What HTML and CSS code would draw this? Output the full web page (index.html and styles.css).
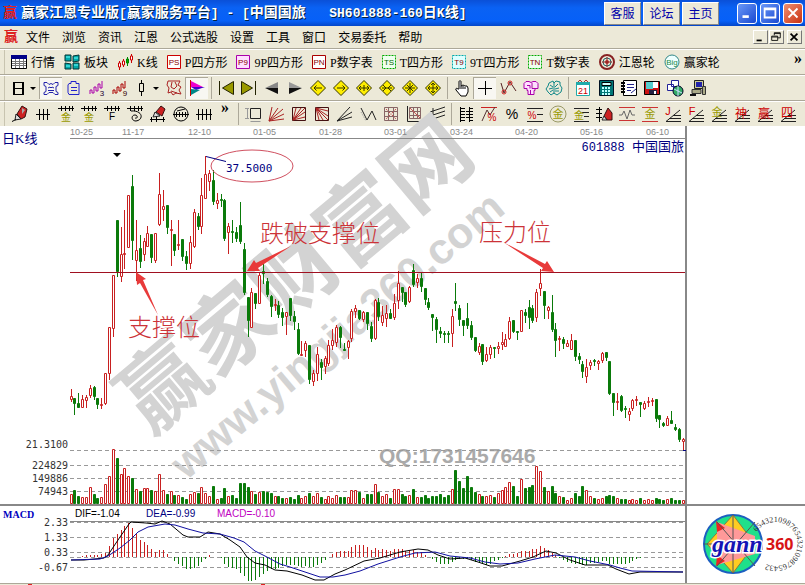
FILE: index.html
```html
<!DOCTYPE html>
<html lang="zh-CN">
<head>
  <meta charset="UTF-8">
  <meta name="viewport" content="width=device-width, initial-scale=1.0">
  <title>赢家江恩专业版</title>
  <link rel="stylesheet" href="styles.css">
</head>
<body>
  <header class="title-bar">
    <span class="app-icon">赢</span>
    <h1>赢家江恩专业版<span class="mono">[</span>赢家服务平台<span class="mono">] - [</span>中国国旅<span class="mono">   SH601888-160</span>日<span class="mono">K</span>线<span class="mono">]</span></h1>
    <nav class="title-links">
      <button>客服</button>
      <button>论坛</button>
      <button>主页</button>
    </nav>
    <div class="window-btns">
      <button aria-label="最小化"><svg viewBox="0 0 20 20"><path d="M5 14h7" stroke="#fff" stroke-width="3"/></svg></button>
      <button aria-label="最大化"><svg viewBox="0 0 20 20"><path d="M4 5h12v10H4z M4 6h12" fill="none" stroke="#fff" stroke-width="2"/></svg></button>
      <button class="close" aria-label="关闭"><svg viewBox="0 0 20 20"><path d="M5 5l10 10M15 5L5 15" stroke="#fff" stroke-width="2"/></svg></button>
    </div>
  </header>

  <nav class="menu-bar">
    <span class="app-icon">赢</span>
    <button>文件</button>
    <button>浏览</button>
    <button>资讯</button>
    <button>江恩</button>
    <button>公式选股</button>
    <button>设置</button>
    <button>工具</button>
    <button>窗口</button>
    <button>交易委托</button>
    <button>帮助</button>
    <div class="mdi-btns">
      <button aria-label="最小化"><svg viewBox="0 0 14 14"><path d="M3 11h6" stroke="#000" stroke-width="2"/></svg></button>
      <button aria-label="还原"><svg viewBox="0 0 14 14"><path d="M5 5V2h7v6h-3M5 3h7M2 6h7v5H2zM2 7h7" fill="none" stroke="#000"/></svg></button>
      <button class="mdi-close" aria-label="关闭"><svg viewBox="0 0 14 14"><path d="M3 3l8 8M11 3l-8 8" stroke="#000" stroke-width="2"/></svg></button>
    </div>
  </nav>

  <div class="toolbar labels">
    <button><svg viewBox="0 0 16 16"><path d="M.5 1.500h15v13H.5z" fill="#fff" stroke="#000"/><path d="M0 1h16v4H0z" fill="#008"/><path d="M1 7.500h14M1 9.500h14M1 11.500h14M4.500 5v9M8.500 5v9M12.500 5v9" stroke="#777"/></svg>行情</button>
    <button><svg viewBox="0 0 16 16" fill="#0aa" stroke="#033"><path d="M1 1h6v6H1zM9 2l6-1v6l-6 1zM1 9l6 1v5H1zM9 9h6v6H9z"/><path d="M2 3h4M10 4h4M2 12h4M10 11h4" stroke="#6ff"/></svg>板块</button>
    <button><svg viewBox="0 0 16 16" fill="#fff"><path d="M2.500 7v9M6.500 5v8M14.500 0v9" stroke="#c00"/><path d="M10.500 3v9" stroke="#080"/><path d="M1.500 9h2v4h-2zM5.500 7h2v4h-2zM13.500 2h2v4h-2z" stroke="#c00"/><path d="M9.500 5h2v4h-2z" fill="#0a0" stroke="#080"/></svg>K线</button>
    <button><svg class="tile" viewBox="0 0 14 14"><path d="M.5.5h13v13H.5z" fill="#fff" stroke="#c00"/><text x="7" y="10" fill="#800">PS</text></svg>P四方形</button>
    <button><svg class="tile" viewBox="0 0 14 14"><path d="M.5.5h13v13H.5z" fill="#fdf" stroke="#a0a"/><text x="7" y="10" fill="#800">P9</text></svg>9P四方形</button>
    <button><svg class="tile" viewBox="0 0 14 14"><path d="M.5.5h13v13H.5z" fill="#fff" stroke="#a00"/><text x="7" y="10" fill="#800">PN</text></svg>P数字表</button>
    <button><svg class="tile" viewBox="0 0 14 14"><path d="M.5.5h13v13H.5z" fill="#efe" stroke="#0a0" stroke-dasharray="2 1"/><text x="7" y="10" fill="#060">TS</text></svg>T四方形</button>
    <button><svg class="tile" viewBox="0 0 14 14"><path d="M.5.5h13v13H.5z" fill="#dff" stroke="#0aa" stroke-dasharray="2 1"/><text x="7" y="10" fill="#800">T9</text></svg>9T四方形</button>
    <button><svg class="tile" viewBox="0 0 14 14"><path d="M.5.5h13v13H.5z" fill="#efe" stroke="#0a0" stroke-dasharray="2 1"/><text x="7" y="10" fill="#800">TN</text></svg>T数字表</button>
    <button><svg viewBox="0 0 16 16" fill="none"><circle cx="8" cy="8" r="7" stroke="#822" stroke-width="2"/><circle cx="8" cy="8" r="4" stroke="#266"/><circle cx="8" cy="8" r="2" fill="#c33"/><path d="M8 3v10M3 8h10" stroke="#822"/></svg>江恩轮</button>
    <button><svg viewBox="0 0 16 16"><circle cx="8" cy="8" r="7" fill="#eff" stroke="#388"/><text x="8" y="11" fill="#284">Big</text></svg>赢家轮</button>
    <button class="more">»</button>
  </div>

  <div class="toolbar icons">
    <button class="slim" aria-label="日线"><svg viewBox="0 0 18 18" fill="none" stroke="#000"><path d="M5 3v13M14 3v13" stroke-width="2"/><path d="M4 3.500h11M5 9.500h9M5 15.500h9"/></svg></button>
    <button class="drop" aria-label="周期"><svg viewBox="0 0 8 8"><path d="M1 3h6L4 6z"/></svg></button>
    <button class="on" aria-label="叠加"><svg viewBox="0 0 18 18" fill="none" stroke="#22a"><path d="M2 3.500h3l2 2 2-1 2 1 2-2h3v3l-2 1v5l2 1v2h-3l-2-2H7l-2 2H2v-2l2-1V7.500l-2-1z"/><path d="M6 9l2-1 1 1 1-1 2 1M6 11.500h6"/></svg></button>
    <button aria-label="记录"><svg viewBox="0 0 18 18" fill="none" stroke="#22c"><path d="M4 4.500h2V2.500h5v2h3v11H4l-1-2V6zM6 8.500h6M6 11.500h6"/></svg></button>
    <button aria-label="三日"><svg viewBox="0 0 18 18" fill="none" stroke="#a0a"><path d="M2 15v-4h2v3h2V8h2v4h2V5h2v4h2V2"/><text x="14" y="17" fill="#203" stroke="none" font-size="8">3</text></svg></button>
    <button aria-label="九日"><svg viewBox="0 0 18 18" fill="none" stroke="#a00"><path d="M2 15v-4h2v3h2V8h2v4h2V5h2v4h2V2"/><text x="14" y="17" fill="#300" stroke="none" font-size="8">9</text></svg></button>
    <button class="slim" aria-label="K线样式"><svg viewBox="0 0 18 18" fill="none" stroke="#000"><path d="M9.500 1v3M9.500 13v4M7.500 4.500h4v8h-4z"/></svg></button>
    <button class="drop" aria-label="样式"><svg viewBox="0 0 8 8"><path d="M1 3h6L4 6z"/></svg></button>
    <button aria-label="画图"><svg viewBox="0 0 18 18" fill="none" stroke="#a22"><path d="M3 2h12l-2 4 3 2-2 3 2 4-5-1-3 2-2-3-3 1 1-5-2-3zM7 3l-1 5 3 2 3-3-2-4M6 12l6 2"/></svg></button>
    <button class="on" aria-label="旗形"><svg viewBox="0 0 18 18"><path d="M3 2l12 6H3z" fill="#e0c"/><path d="M3 8h14l-9 3z" fill="#40c"/><path d="M3 10l9 1-9 5z" fill="#088"/><path d="M2.500 1v16" stroke="#c00"/></svg></button>
    <i class="sep"></i>
    <button aria-label="首页"><svg viewBox="0 0 18 18" fill="#990" stroke="#220"><path d="M2.500 2v14M16.500 2.500v13L5.500 9z"/></svg></button>
    <button aria-label="末页"><svg viewBox="0 0 18 18" fill="#990" stroke="#220"><path d="M15.500 2v14M1.500 2.500v13L12.500 9z"/></svg></button>
    <button aria-label="左移"><svg viewBox="0 0 18 18"><path d="M2 9l13-6v6z" fill="#888"/><path d="M2 9h13v6z" fill="#111"/></svg></button>
    <button aria-label="右移"><svg viewBox="0 0 18 18"><path d="M3 3l13 6H3z" fill="#999"/><path d="M3 9h13L3 15z" fill="#111"/></svg></button>
    <button aria-label="左"><svg viewBox="0 0 18 18" fill="#fe0" stroke="#330"><path d="M9 1.500L16.500 9 9 16.500 1.500 9z"/><path d="M5 9h8M7.500 6.500L5 9l2.500 2.500" fill="none"/></svg></button>
    <button aria-label="右"><svg viewBox="0 0 18 18" fill="#fe0" stroke="#330"><path d="M9 1.500L16.500 9 9 16.500 1.500 9z"/><path d="M5 9h8M10.500 6.500L13 9l-2.500 2.500" fill="none"/></svg></button>
    <button aria-label="横向放大"><svg viewBox="0 0 18 18" fill="#fe0" stroke="#330"><path d="M9 1.500L16.500 9 9 16.500 1.500 9z"/><path d="M4 9h10M6 7L4 9l2 2M12 7l2 2-2 2M9 6v6" fill="none"/></svg></button>
    <button aria-label="横向缩小"><svg viewBox="0 0 18 18" fill="#fe0" stroke="#330"><path d="M9 1.500L16.500 9 9 16.500 1.500 9z"/><path d="M4 9h10M5 6l3 3-3 3M13 6l-3 3 3 3" fill="none"/></svg></button>
    <button aria-label="缩小"><svg viewBox="0 0 18 18" fill="#fe0" stroke="#330"><path d="M9 1.500L16.500 9 9 16.500 1.500 9z"/><path d="M4 9h10M9 4v10M6 6l6 6M12 6l-6 6" fill="none"/></svg></button>
    <button aria-label="放大"><svg viewBox="0 0 18 18" fill="#fe0" stroke="#330"><path d="M9 1.500L16.500 9 9 16.500 1.500 9z"/><path d="M4 9h10M9 4v10M7 6l2-2 2 2M7 12l2 2 2-2M6 7L4 9l2 2M12 7l2 2-2 2" fill="none"/></svg></button>
    <i class="sep"></i>
    <button aria-label="拖动"><svg viewBox="0 0 18 18" fill="#fff" stroke="#000"><path d="M6 10V2.500c0-1 2-1 2 0V7l2-1 2 1 2 0 1 2v4l-2 4H8l-5-6c-1-2 1-2 2-1zM8 7v3M10 7v3M12 8v2"/></svg></button>
    <button class="on" aria-label="十字线"><svg viewBox="0 0 18 18"><path d="M2 9.500h14M9.500 2v14" stroke="#000"/></svg></button>
    <button aria-label="连线"><svg viewBox="0 0 18 18" fill="none" stroke="#c22"><path d="M2 4l3 10 6-11 6 9" stroke="#522"/><circle cx="5" cy="13" r="2"/><circle cx="11" cy="4" r="2"/></svg></button>
    <button aria-label="区域"><svg viewBox="0 0 18 18" fill="#fdf" stroke="#a0a"><path d="M2 9.500v-5l2-2h3l2 1 2-1h3l2 2v5h-3v2h-1v4H6v-4H5v-2zM5 6.500h3v3M10 4v5.500h3M8.500 11v4"/></svg></button>
    <button aria-label="分析"><svg viewBox="0 0 18 18" fill="none" stroke="#188"><path d="M8 2L4 4 3 7 1 10l2 3 3 3 3-2 3 2 4-3 1-4-2-3V3l-4-1-2 2zM9 3v12M5 6l3 2M4 10l4-1M5 13l3-2M13 5l-3 3M14 9l-4 1M14 12l-4 0"/></svg></button>
    <i class="sep"></i>
    <button aria-label="日历"><svg viewBox="0 0 18 18"><path d="M2.500 4.500h13v12h-13z" fill="#fff" stroke="#2aa"/><path d="M2 3h14v3H2z" fill="#2aa"/><path d="M4 3l2-2 2 2M10 3l2-2 2 2" fill="none" stroke="#a33"/><text x="9" y="15" fill="#c00" font-size="9">21</text></svg></button>
    <button aria-label="计算器"><svg viewBox="0 0 18 18"><path d="M2.500 1.500h14v15h-14z" fill="#077" stroke="#012"/><path d="M5 3.500h9v3H5z" fill="#cff" stroke="#000"/><path d="M5 9h9M5 12h9M5 15h9" stroke="#bff" stroke-width="2" stroke-dasharray="2 1"/></svg></button>
    <button aria-label="笔记"><svg viewBox="0 0 18 18"><path d="M3.500 1.500h13v15h-13z" fill="#fff" stroke="#000"/><path d="M1 4h4M1 7h4M1 10h4M1 13h4" stroke="#000" stroke-width="2"/><path d="M7 5.500h7M7 8.500h7M7 11.500h4M11 14l5-4" stroke="#228"/></svg></button>
    <button aria-label="保存"><svg viewBox="0 0 18 18"><path d="M1.500 2.500h15v13h-15z" fill="#c11" stroke="#000"/><path d="M3 3h7v7H3z" fill="#5cc"/><path d="M10 3h5v6h-5z" fill="#fff"/><path d="M6 11h8v4H6z" fill="#224"/><path d="M11 12h2v3h-2z" fill="#fff"/></svg></button>
    <button aria-label="网络"><svg viewBox="0 0 18 18"><path d="M5.500 1.500h7v6h-7zM1.500 5.500h6v6h-6z" fill="#fff" stroke="#229"/><circle cx="12" cy="12" r="5" fill="#3a6" stroke="#002"/><path d="M8 10l8 4M12 7v10" stroke="#cdf"/></svg></button>
    <button aria-label="系统"><svg viewBox="0 0 18 18"><path d="M5.500 1.500h9v8h-9z" fill="#cc9" stroke="#222"/><path d="M7 3h6v5H7z" fill="#22a"/><path d="M3 10.500h9v4H3zM13.500 7.500h3v8h-3z" fill="#aa8" stroke="#333"/><path d="M1 15h6v2H1z" fill="#111"/></svg></button>
  </div>

  <div class="toolbar icons">
    <button aria-label="画笔"><svg viewBox="0 0 18 18"><path d="M6 9l5-8 5 3-2 8-4 2z" fill="#c22" stroke="#311"/><path d="M5 9l5 5-6 1z" fill="#ddd" stroke="#222"/><path d="M1 16.500l4-2" stroke="#000"/><path d="M11 3l3 2-3 4z" fill="#aaa"/></svg></button>
    <button aria-label="周期尺"><svg viewBox="0 0 18 18"><path d="M2 9.500h14M5.500 4v11M9.500 4v11M13.500 4v11" stroke="#000"/></svg></button>
    <button aria-label="金尺一"><svg viewBox="0 0 18 18"><path d="M1 3.500h16M4.500 1v5M8.500 1v5M12.500 1v5M15.500 1v5" stroke="#000"/><text x="9" y="16" fill="#990" font-size="10">金</text></svg></button>
    <button aria-label="金尺二"><svg viewBox="0 0 18 18"><path d="M1 3.500h16M4.500 1v5M8.500 1v5M12.500 1v5M15.500 1v5" stroke="#000"/><text x="9" y="16" fill="#990" font-size="10">金</text></svg></button>
    <button aria-label="斐波那契尺"><svg viewBox="0 0 18 18"><path d="M1 3.500h16M4.500 1v5M8.500 1v5M12.500 1v5M15.500 1v5" stroke="#000"/><text x="9" y="15" font-size="10">F</text></svg></button>
    <button aria-label="螺旋尺"><svg viewBox="0 0 18 18" fill="none" stroke="#000"><path d="M1 3.500h16M4.500 1v5M8.500 1v5M12.500 1v5M15.500 1v5"/><path d="M5 6c12-1 13 9 5 10-5 0-5-6-1-6 3 0 3 4 0 3"/></svg></button>
    <button aria-label="标尺笔"><svg viewBox="0 0 18 18"><path d="M7 7l5-6 4 3-3 7z" fill="#c22" stroke="#311"/><path d="M6 7l5 4-7 1z" fill="#ddd" stroke="#222"/><path d="M1 14.500h15M2.500 12v5M7.500 12v5M14.500 12v5" stroke="#000"/></svg></button>
    <button aria-label="圆周"><svg viewBox="0 0 18 18" fill="none" stroke="#000"><circle cx="9" cy="9" r="7"/><path d="M1 9.500h16M4.500 7v5M7.500 7v5M10.500 7v5M13.500 7v5M5 6l8-2"/></svg></button>
    <button aria-label="等分"><svg viewBox="0 0 18 18"><path d="M1 9.500h16M3.500 4v11M7.500 4v11M11.500 4v11M15.500 4v11" stroke="#000"/></svg></button>
    <button class="overflow">»</button>
    <i class="sep"></i>
    <button aria-label="矩形"><svg viewBox="0 0 18 18" fill="none" stroke="#222"><path d="M6.500 3.500h10v10h-10z"/><path d="M1 3.500h4M1 13.500h4M3.500 3v11M6.500 16.500h10" stroke="#999"/></svg></button>
    <button aria-label="扇形"><svg viewBox="0 0 18 18" stroke="#a22"><path d="M2 16L5 2M2 16L11 3M2 16L16 4M2 16L17 9M2 16l15-2"/></svg></button>
    <button aria-label="方扇形"><svg viewBox="0 0 18 18" fill="none" stroke="#a22"><path d="M2.500 2.500h13v13h-13z" stroke="#411"/><path d="M3 15L6 3M3 15l8-12M3 15L15 3M3 15l12-8M3 15l12-3"/></svg></button>
    <button aria-label="反扇形"><svg viewBox="0 0 18 18" fill="none" stroke="#a22"><path d="M2.500 2.500h13v13h-13z" stroke="#411"/><path d="M3 3l3 12M3 3l7 12M3 3l12 12M3 3l12 8M3 3l12 3"/></svg></button>
    <button aria-label="速度线"><svg viewBox="0 0 18 18" stroke="#222"><path d="M1 16L14 2M1 16L16 7M1 16l15-4"/></svg></button>
    <button aria-label="折线"><svg viewBox="0 0 18 18" fill="none" stroke="#222"><path d="M2 3l6 12 5-9 4 9"/><path d="M2 7l5 9" stroke="#999" stroke-dasharray="1 1"/></svg></button>
    <button aria-label="网格"><svg viewBox="0 0 18 18" fill="none" stroke="#866"><path d="M2.500 2.500h13v13h-13zM2 6.500h14M2 11.500h14M6.500 2v14M11.500 2v14"/><path d="M4 4l10 10M14 4L4 14" stroke="#c55" stroke-dasharray="2 2"/></svg></button>
    <button aria-label="坐标网格"><svg viewBox="0 0 18 18" fill="none" stroke="#866"><path d="M4.500 2.500h11v11h-11zM4 6.500h12M4 10.500h12M8.500 2v12M12.500 2v12"/><path d="M2.500 1v15.500h15" stroke="#222"/><path d="M5 3l10 10" stroke="#c55"/></svg></button>
    <button aria-label="平行线"><svg viewBox="0 0 18 18" stroke="#222"><path d="M2 7l15-5M2 11l15-5M2 15l15-5M5 3v13"/></svg></button>
    <i class="sep"></i>
    <button aria-label="价格尺"><svg viewBox="0 0 18 18" stroke="#000"><path d="M3.500 2v15M12.500 2v15M4 3.500h4M4 6.500h4M4 9.500h4M4 12.500h4M4 15.500h4M12 3.500h4M9 6.500h7M9 9.500h7M9 12.500h7M12 15.500h4"/></svg></button>
    <button aria-label="百分比线"><svg viewBox="0 0 18 18"><path d="M1 2.500h16" stroke="#c22"/><path d="M2 16l5-11 3 5 5-8" fill="none" stroke="#533"/><text x="12" y="16" fill="#c00" font-size="10">%</text></svg></button>
    <button aria-label="百分比"><svg viewBox="0 0 18 18"><text x="9" y="14" font-size="14">%</text></svg></button>
    <button aria-label="百分比区"><svg viewBox="0 0 18 18"><path d="M1 3.500h16M11 9.500h6M1 16.500h16" stroke="#222"/><text x="6" y="14" fill="#c00" font-size="10">%</text></svg></button>
    <button aria-label="金圆"><svg viewBox="0 0 18 18"><circle cx="9" cy="9" r="8" fill="none" stroke="#996"/><text x="9" y="13" fill="#990" font-size="11">金</text></svg></button>
    <button aria-label="金线"><svg viewBox="0 0 18 18"><path d="M2 3.500h15M10 7.500h7M12 11.500h5M2 16.500h15" stroke="#222"/><text x="7" y="14" fill="#990" font-size="10">金</text></svg></button>
    <button aria-label="标注"><svg viewBox="0 0 18 18"><path d="M4.500 2v15M1 4.500h6M1 8.500h6M1 12.500h6" stroke="#000"/><path d="M9 11l4-8 4 5v7l-5 0z" fill="#c22" stroke="#311"/><path d="M7 15l2-4 3 4z" fill="#ddd" stroke="#222"/></svg></button>
    <button aria-label="波浪"><svg viewBox="0 0 18 18" fill="none"><path d="M1 2.500h16M1 15.500h16" stroke="#c33"/><path d="M1 10h3l2-4 3 8 3-9 2 5h3" stroke="#666"/></svg></button>
    <button aria-label="金波"><svg viewBox="0 0 18 18"><path d="M1 2.500h16M1 16.500h16" stroke="#c33"/><text x="9" y="13" fill="#990" font-size="11">金</text></svg></button>
    <button aria-label="J线"><svg viewBox="0 0 18 18"><path d="M2 16.500L16 5M5 13.500h12M2 16.500h15M9 10.500h8" stroke="#222"/><text x="4" y="10" fill="#c00" font-size="11">J</text></svg></button>
    <button aria-label="F线"><svg viewBox="0 0 18 18"><path d="M2 16.500L16 5M5 13.500h12M2 16.500h15M9 10.500h8" stroke="#222"/><text x="5" y="10" fill="#c00" font-size="11">F</text></svg></button>
    <button aria-label="金角线"><svg viewBox="0 0 18 18"><path d="M2 16.500L16 5M5 13.500h12M2 16.500h15M9 10.500h8" stroke="#222"/><text x="7" y="11" fill="#990" font-size="11">金</text></svg></button>
    <button aria-label="神线"><svg viewBox="0 0 18 18"><path d="M2 16.500L16 5M5 13.500h12M2 16.500h15M9 10.500h8" stroke="#222"/><text x="8" y="13" fill="#c00" font-size="12">神</text></svg></button>
    <button aria-label="赢线"><svg viewBox="0 0 18 18"><path d="M2 16.500L16 5M5 13.500h12M2 16.500h15M9 10.500h8" stroke="#222"/><text x="8" y="13" fill="#c00" font-size="12">赢</text></svg></button>
    <button aria-label="四线"><svg viewBox="0 0 18 18"><path d="M2 16.500L16 5M5 13.500h12M2 16.500h15M9 10.500h8" stroke="#222"/><text x="8" y="12" fill="#c00" font-size="12">四</text></svg></button>
  </div>

  <main class="workspace">
    <section class="chart">
      <svg viewBox="0 126 685 457">
        <g class="watermark">
          <text transform="translate(150 436) rotate(-40)" font-size="86">赢家财富网</text>
          <text transform="translate(186 481) rotate(-40)" font-size="43" class="site">www.yingjia360.com</text>
        </g>
        <text class="qq" x="379" y="463">QQ:1731457646</text>

        <path class="axis" d="M70 138.500H685M70 521.500H685"/>
        <path class="dash" d="M70 450.500H685M70 465.500H685M70 478.500H685M70 491.500H685"/>
        <path class="dash" d="M70 522.500H685M70 537.500H685M70 552.500H685M70 557.500H685M70 567.500H685"/>
        <g class="dates">
          <text x="70" y="135">10-25</text>
          <text x="122" y="135">11-17</text>
          <text x="188" y="135">12-10</text>
          <text x="253" y="135">01-05</text>
          <text x="319" y="135">01-28</text>
          <text x="384" y="135">03-01</text>
          <text x="450" y="135">03-24</text>
          <text x="515" y="135">04-20</text>
          <text x="580" y="135">05-16</text>
          <text x="646" y="135">06-10</text>
        </g>
        <g class="scale">
          <text x="68" y="448">21.3100</text>
          <text x="68" y="469">224829</text>
          <text x="68" y="482">149886</text>
          <text x="68" y="495">74943</text>
          <text x="68" y="526">2.33</text>
          <text x="68" y="541">1.33</text>
          <text x="68" y="556">0.33</text>
          <text x="68" y="571">-0.67</text>
        </g>
        <text class="name" x="2" y="143">日K线</text>
        <text class="name" x="684" y="151" text-anchor="end"><tspan class="mono">601888 </tspan>中国国旅</text>
        <text class="name macd-name" x="3" y="518">MACD</text>
        <g class="macd-values">
          <text x="75" y="517">DIF=-1.04</text>
          <text x="146" y="517" fill="#000080">DEA=-0.99</text>
          <text x="217" y="517" fill="#c000c0">MACD=-0.10</text>
        </g>

        <g id="candles"></g>
        <g id="volume"></g>
        <g id="macd"></g>
        <polyline class="dif" points="71,560 84,560 95,559 104,558 108,555 114,546 120,537 129,524 131,522 146,523 155,524 162,521 170,524 183,535 188,537 200,537 208,532 220,534 230,540 240,547 247,557 255,563 265,565 275,570 287,571 302,575 315,580 324,580 335,574 345,570 364,561 380,558 400,552 418,549 428,550 438,555 450,559 465,558 478,562 490,566 502,566 520,561 533,557 546,551 556,553 570,560 585,565 608,565 616,569 629,574 640,572 683,572"/>
        <polyline class="dea" points="71,560 100,559 108,556 120,548 130,540 138,532 148,527 165,524 175,525 188,529 203,533 220,534 234,538 244,542 255,551 265,556 280,564 290,567 305,572 320,577 333,577 345,575 360,571 378,564 400,557 415,553 435,552 450,556 470,558 485,562 500,564 518,563 535,559 555,555 575,557 590,561 610,565 620,568 632,571 683,572"/>

        <path class="level" d="M70 272.500H685"/>
        <path d="M113 153h8l-4 4z"/>
        <ellipse class="peak" cx="252" cy="166" rx="41" ry="16"/>
        <path class="pointer" d="M206 156.500l20 5M683 450.500h3"/>
        <text class="peak-value" x="226" y="172">37.5000</text>
        <g class="notes">
          <text x="128" y="336">支撑位</text>
          <text x="260" y="242">跌破支撑位</text>
          <text x="479" y="241">压力位</text>
          <path d="M136 272l10 7-3 1 15 35-18-32-3 2zM247 271l7-11 2 3 35-17-33 22 2 3zM554 272l-13-1 2-3-40-26 42 22 2-3z"/>
        </g>
        <path class="divider" d="M0 505H685"/>
      </svg>
    </section>
    <aside class="side">
      <div class="quote"></div>
      <div class="logo">
        <svg viewBox="0 0 118 77">
          <circle cx="46" cy="38" r="29" fill="#1fe08a" stroke="#1c5fc0" stroke-width="2"/>
          <path d="M46 9l22 29-22 29-26-29z" fill="#fc2" stroke="#874"/>
          <path d="M30 16l38 14v18L30 59z" fill="#f99"/>
          <path d="M29 15l9 7-8 4zM29 60l9-5-8-6z" fill="#e22"/>
          <path d="M46 9v58M17 38h58M30 16l38 44M30 60l38-44" stroke="#555" fill="none"/>
          <path id="ring" d="M70 26A22 22 0 1 1 70 50" fill="none"/>
          <text class="digits"><textPath href="#ring">6543210987654321098765432</textPath></text>
          <text class="gann" x="25" y="46">gann</text>
          <text class="num" x="79" y="44">360</text>
        </svg>
      </div>
    </aside>
  </main>
  <footer class="scroll"><i></i><i></i></footer>
  <script src="chart.js"></script>
</body>
</html>
```
FILE: styles.css
```css
body, html {
  margin: 0;
  padding: 0;
}
body {
  background: #fff;
  font-family: "Liberation Serif", "Noto Sans CJK SC", serif;
  font-size: 12px;
  overflow: hidden;
}
button {
  margin: 0;
  padding: 0;
  border: 0;
  background: none;
  font: inherit;
  color: #000;
  white-space: nowrap;
}
svg {
  display: block;
}
.mono {
  font-family: "Liberation Mono", monospace;
  font-size: 12px;
}

.title-bar {
  display: flex;
  align-items: center;
  height: 26px;
  padding-left: 3px;
  background: linear-gradient(#0a50d8, #0a62f4 30%, #0660f8 80%, #0446c8);
  color: #fff;
}
.title-bar h1 {
  flex: 1;
  margin: 0 0 0 4px;
  font-size: 14px;
  line-height: 20px;
  white-space: pre;
  text-shadow: 1px 1px #024;
}
.title-bar .mono {
  font-size: 13px;
}
.app-icon {
  width: 14px;
  font-size: 14px;
  line-height: 18px;
  font-weight: bold;
  color: #d22;
}
.title-links {
  display: flex;
  gap: 2px;
}
.title-links button {
  width: 37px;
  height: 23px;
  background: #ece9d8;
  border: 1px solid;
  border-color: #fff #888 #888 #fff;
  color: #00a;
}
.window-btns {
  display: flex;
  gap: 3px;
  margin: 0 2px 0 18px;
}
.window-btns button {
  width: 20px;
  height: 21px;
  border: 1px solid #fff;
  border-radius: 3px;
  background: linear-gradient(135deg, #6a98f8, #1848d0);
}
.window-btns .close {
  background: linear-gradient(135deg, #f09070, #c83010);
}

.menu-bar {
  display: flex;
  align-items: center;
  height: 22px;
  padding-left: 4px;
  background: #ece9d8;
}
.menu-bar > button {
  padding: 0 6px;
}
.menu-bar .app-icon {
  margin-right: 2px;
}
.mdi-btns {
  display: flex;
  gap: 1px;
  margin-left: auto;
  padding-right: 3px;
}
.mdi-btns button {
  width: 15px;
  height: 14px;
  border: 1px solid;
  border-color: #fff #777 #777 #fff;
}
.mdi-btns svg {
  width: 12px;
  height: 12px;
}
.mdi-btns .mdi-close {
  margin-left: 2px;
}

.toolbar {
  display: flex;
  align-items: center;
  box-sizing: border-box;
  height: 26px;
  padding-left: 8px;
  background: #ece9d8;
  border-top: 1px solid #aca899;
  box-shadow: inset 0 1px #fff, inset 4px 0 #ece9d8, inset 5px 0 #c8c4b0;
}
.labels button {
  display: flex;
  align-items: center;
  gap: 4px;
  margin-right: 9px;
}
.labels button:first-child {
  margin-left: 3px;
}
.labels svg {
  width: 16px;
  height: 16px;
}
.labels svg.tile {
  width: 14px;
  height: 14px;
}
.labels svg text {
  font: 8px "Liberation Sans", sans-serif;
  text-anchor: middle;
}
.labels .more {
  margin: 0 3px 6px auto;
}
.more, .overflow {
  font-size: 16px;
  font-weight: bold;
  line-height: 12px;
}
.icons button {
  display: flex;
  flex: 0 0 23px;
  align-items: center;
  justify-content: center;
  height: 22px;
}
.icons svg {
  flex: none;
  width: 18px;
  height: 18px;
}
.icons svg text {
  font-family: "Liberation Sans", "Noto Sans CJK SC", sans-serif;
  text-anchor: middle;
}
.icons .slim {
  flex-basis: 19px;
}
.icons .drop {
  flex-basis: 12px;
}
.icons .drop svg {
  width: 8px;
  height: 8px;
}
.icons .overflow {
  flex-basis: 20px;
  height: 14px;
  align-self: flex-start;
}
.icons .on {
  background: #f8f7f2;
  box-shadow: inset 1px 1px #aca899;
}
.sep {
  flex: 0 0 1px;
  height: 22px;
  margin: 0 2px 0 3px;
  background: #aca899;
}

.workspace {
  display: flex;
}
.chart {
  flex: 1;
  min-width: 0;
  border-right: 2px solid #888;
}
.chart svg {
  width: 100%;
  height: auto;
  overflow: visible;
}
.watermark {
  fill: #d3d3d3;
  font-family: "Noto Sans CJK SC", sans-serif;
  font-weight: bold;
}
.site, .qq {
  font-family: "Liberation Sans", sans-serif;
  font-weight: bold;
}
.qq {
  font-size: 21px;
  fill: #aaa;
}
.axis {
  stroke: #888;
}
.dash {
  stroke: #999;
  stroke-dasharray: 4 3;
}
.dates {
  font: 9px "Liberation Sans", sans-serif;
  fill: #888;
}
.scale {
  font: 10px "DejaVu Sans Mono", monospace;
  fill: #333;
  text-anchor: end;
}
.name {
  font-size: 13px;
  fill: #000080;
}
.macd-name {
  font-size: 10px;
  font-weight: bold;
  fill: #0000c0;
}
.macd-values {
  font: 10px "Liberation Sans", sans-serif;
}
.up {
  fill: #fff;
  stroke: #c82020;
}
.down {
  fill: #0a7a0a;
  stroke: #0a7a0a;
}
.dif, .dea {
  fill: none;
  stroke: #000;
}
.dea {
  stroke: #1010a0;
}
.level {
  stroke: #a01020;
}
.peak {
  fill: none;
  stroke: #d05060;
}
.pointer {
  stroke: #000080;
}
.peak-value {
  font: 11px "DejaVu Sans Mono", monospace;
  fill: #000080;
}
.notes {
  font-family: "Noto Sans CJK SC", sans-serif;
  font-size: 24px;
  font-weight: 300;
  fill: #cc3338;
}
.notes path {
  fill: #e83a3a;
}
.divider {
  stroke: #888;
  stroke-width: 2;
}

.side {
  display: flex;
  flex: 0 0 118px;
  flex-direction: column;
}
.quote {
  flex: 1;
}
.logo {
  border-top: 2px solid #888;
}
.gann {
  font: italic bold 24px "Liberation Serif", serif;
  fill: #1414b4;
  stroke: #fff;
  stroke-width: 3px;
  paint-order: stroke;
}
.num {
  font: bold 16px "Open Sans", sans-serif;
  fill: #d81414;
}
.digits {
  font: 8px "Liberation Serif", serif;
  fill: #333;
}

.scroll {
  display: flex;
  justify-content: space-between;
  height: 2px;
  padding: 0 540px 0 28px;
  background: #ece9d8;
  border-top: 1px solid #aca899;
}
.scroll i {
  width: 4px;
  height: 2px;
  background: #d22;
}
```
FILE: chart.js
```js
// direction, high, body top, body bottom, low
var candles = `
r389,396,399,401 g398,398,403,414 g393,403,407,407 r395,399,407,407 r395,397,400,407 r385,388,395,397 g386,387,396,399 g398,398,404,408
r398,404,405,408 r373,373,403,404 r327,327,373,379 r275,275,328,336 g220,220,271,276 r227,254,276,281 r210,253,254,268 r195,195,247,247
g175,186,240,259 r220,250,260,280 g235,248,261,267 r238,241,254,260 r226,233,246,246 g234,234,257,262 r233,233,260,262 r173,194,224,225
r190,206,209,220 g205,205,227,233 r220,229,230,265 g234,234,250,255 r220,244,245,249 g239,239,256,260 g251,256,263,269 r236,242,263,268
r209,212,246,247 g213,216,226,229 r178,195,226,233 r156,174,198,198 r170,173,181,190 g170,180,201,204 r193,200,203,208 g194,199,200,206
g199,200,238,240 r223,226,232,253 g220,231,232,242 g227,232,238,241 g202,225,241,243 g243,249,292,294 g297,297,320,336 r288,292,327,327
g293,293,303,308 r273,275,303,303 g264,271,273,283 g278,281,294,296 g295,296,306,316 r299,304,305,310 g301,305,314,317 g308,312,317,325
r312,312,316,334 g298,298,315,320 g311,316,321,329 g323,329,353,354 r341,354,355,355 r341,343,350,356 g345,345,379,383 r370,373,381,385
r347,354,373,380 g359,362,367,379 r356,358,366,373 r340,345,363,365 r329,340,345,349 r325,327,342,346 g326,327,337,347 g343,349,350,350
r340,341,347,358 r309,311,338,341 r305,308,311,317 g310,310,318,319 r311,312,319,321 g312,312,323,329 g322,326,338,341 r299,300,338,339
g298,302,316,320 r306,315,322,325 r305,313,318,326 g309,313,318,318 r294,303,317,319 r271,283,300,308 g287,287,292,301 g292,292,304,306
r286,287,301,302 g264,270,284,286 r274,278,282,287 g273,278,286,291 g288,288,299,304 g298,302,307,309 g314,314,317,330 g317,319,329,342
g327,331,333,337 g331,333,334,342 g331,333,334,342 r309,316,333,346 g283,301,303,310 g305,308,319,325 g320,320,325,335 g303,318,325,328
g321,325,337,339 g337,337,350,351 r343,346,352,354 g344,344,361,364 r347,354,360,361 r345,347,354,358 g347,347,348,357 r342,346,348,353
r332,342,344,349 r334,339,346,346 r317,321,338,339 g320,320,331,332 g331,331,332,339 r310,310,331,331 g309,312,315,322 g300,307,317,328
g305,308,320,322 r289,292,317,321 r269,283,288,295 g291,291,305,318 r306,307,310,318 g295,312,329,331 g323,329,340,356 r336,338,339,350
g337,339,343,348 r340,343,346,346 r334,340,349,349 g340,340,356,360 g353,356,359,363 g361,364,371,377 r359,367,376,382 r360,362,365,369
g359,360,361,365 r360,361,363,369 r352,353,360,362 g352,352,357,360 g361,361,393,394 g393,393,402,415 r393,401,402,409 g395,396,410,411
g406,408,409,417 r408,411,414,420 r399,400,408,410 r396,399,400,405 g402,402,404,416 r401,403,408,409 r397,401,402,406 r398,400,401,405
g399,399,418,421 g415,415,419,427 g422,423,425,426 r416,418,425,425 g411,420,423,423 g424,427,429,430 g428,429,439,441 r438,439,441,450
`.trim().split(/\s+/);

var volume = [
  9, 13, 7, 6, 6, 16, 9, 5, 6, 19, 27, 54, 45, 29, 35, 27, 25, 14, 12, 15,
  15, 13, 12, 29, 13, 9, 12, 8, 8, 6, 4, 9, 11, 10, 16, 10, 7, 17, 4, 5,
  15, 7, 8, 5, 20, 20, 16, 12, 9, 11, 12, 11, 10, 7, 7, 5, 5, 6, 4, 8,
  5, 7, 10, 7, 10, 6, 4, 7, 5, 8, 6, 6, 6, 13, 13, 11, 5, 9, 9, 19,
  11, 7, 9, 5, 14, 14, 9, 7, 8, 14, 6, 6, 8, 5, 7, 7, 9, 6, 8, 14,
  33, 22, 15, 27, 16, 11, 9, 7, 7, 8, 6, 10, 13, 16, 21, 17, 7, 24, 15, 16,
  18, 37, 32, 16, 12, 17, 10, 7, 6, 3, 5, 10, 7, 17, 13, 7, 5, 4, 5, 7,
  8, 7, 5, 4, 4, 3, 4, 3, 5, 3, 4, 3, 5, 4, 3, 4, 5, 3, 3, 3
];

var macd = [
  0, 0, 0, 1, 2, 2, 2, 2, 3, 4, 11, 19, 23, 27, 31, 34, 29, 24, 17, 15,
  12, 8, 5, 7, 7, 3, 0, -4, -7, -9, -12, -12, -11, -9, -5, -2, 2, 0, 0, -1,
  -7, -10, -11, -12, -16, -19, -24, -24, -23, -20, -17, -14, -12, -12, -11, -9, -8, -8, -8, -9,
  -10, -9, -10, -10, -8, -6, -3, 0, 3, 5, 6, 6, 6, 10, 12, 12, 12, 10, 7, 9,
  7, 8, 7, 6, 8, 8, 8, 6, 6, 7, 5, 5, 2, 0, -2, -5, -7, -7, -7, -5,
  -3, -2, -2, -2, -3, -5, -6, -7, -8, -7, -4, -3, -1, 1, 3, 3, 4, 6, 6, 6,
  8, 8, 11, 9, 7, 4, 2, -1, -3, -5, -6, -7, -7, -8, -8, -6, -6, -5, -4, -4,
  -7, -7, -7, -7, -7, -6, -4, -2, -1, 0, 0, 0, 0, 0, 0, 0, 0, 0, 0, 0
];

var STEP = 612 / 159;
var BASE = 503;
var ZERO = 557;

function path(cls, d) {
  return '<path class="' + cls + '" d="' + d + '"/>';
}

function box(x, top, bottom) {
  return 'M' + (x - 1) + ' ' + (top + 0.5) + 'h2V' + (bottom + 0.5) + 'h-2z';
}

var candleHtml = '';
var volumeHtml = '';
var macdHtml = '';

candles.forEach(function (item, i) {
  var cls = item[0] === 'r' ? 'up' : 'down';
  var v = item.slice(1).split(',').map(Number);
  var x = Math.floor(71 + i * STEP) + 0.5;
  candleHtml += path(cls, 'M' + x + ' ' + v[0] + 'V' + (v[3] + 1));
  candleHtml += path(cls, box(x, v[1], v[2]));
  volumeHtml += path(cls, box(x, BASE - volume[i], BASE));
  if (macd[i]) {
    macdHtml += path(macd[i] > 0 ? 'up' : 'down', 'M' + x + ' ' + ZERO + 'v' + -macd[i]);
  }
});

document.getElementById('candles').innerHTML = candleHtml;
document.getElementById('volume').innerHTML = volumeHtml;
document.getElementById('macd').innerHTML = macdHtml;
```
